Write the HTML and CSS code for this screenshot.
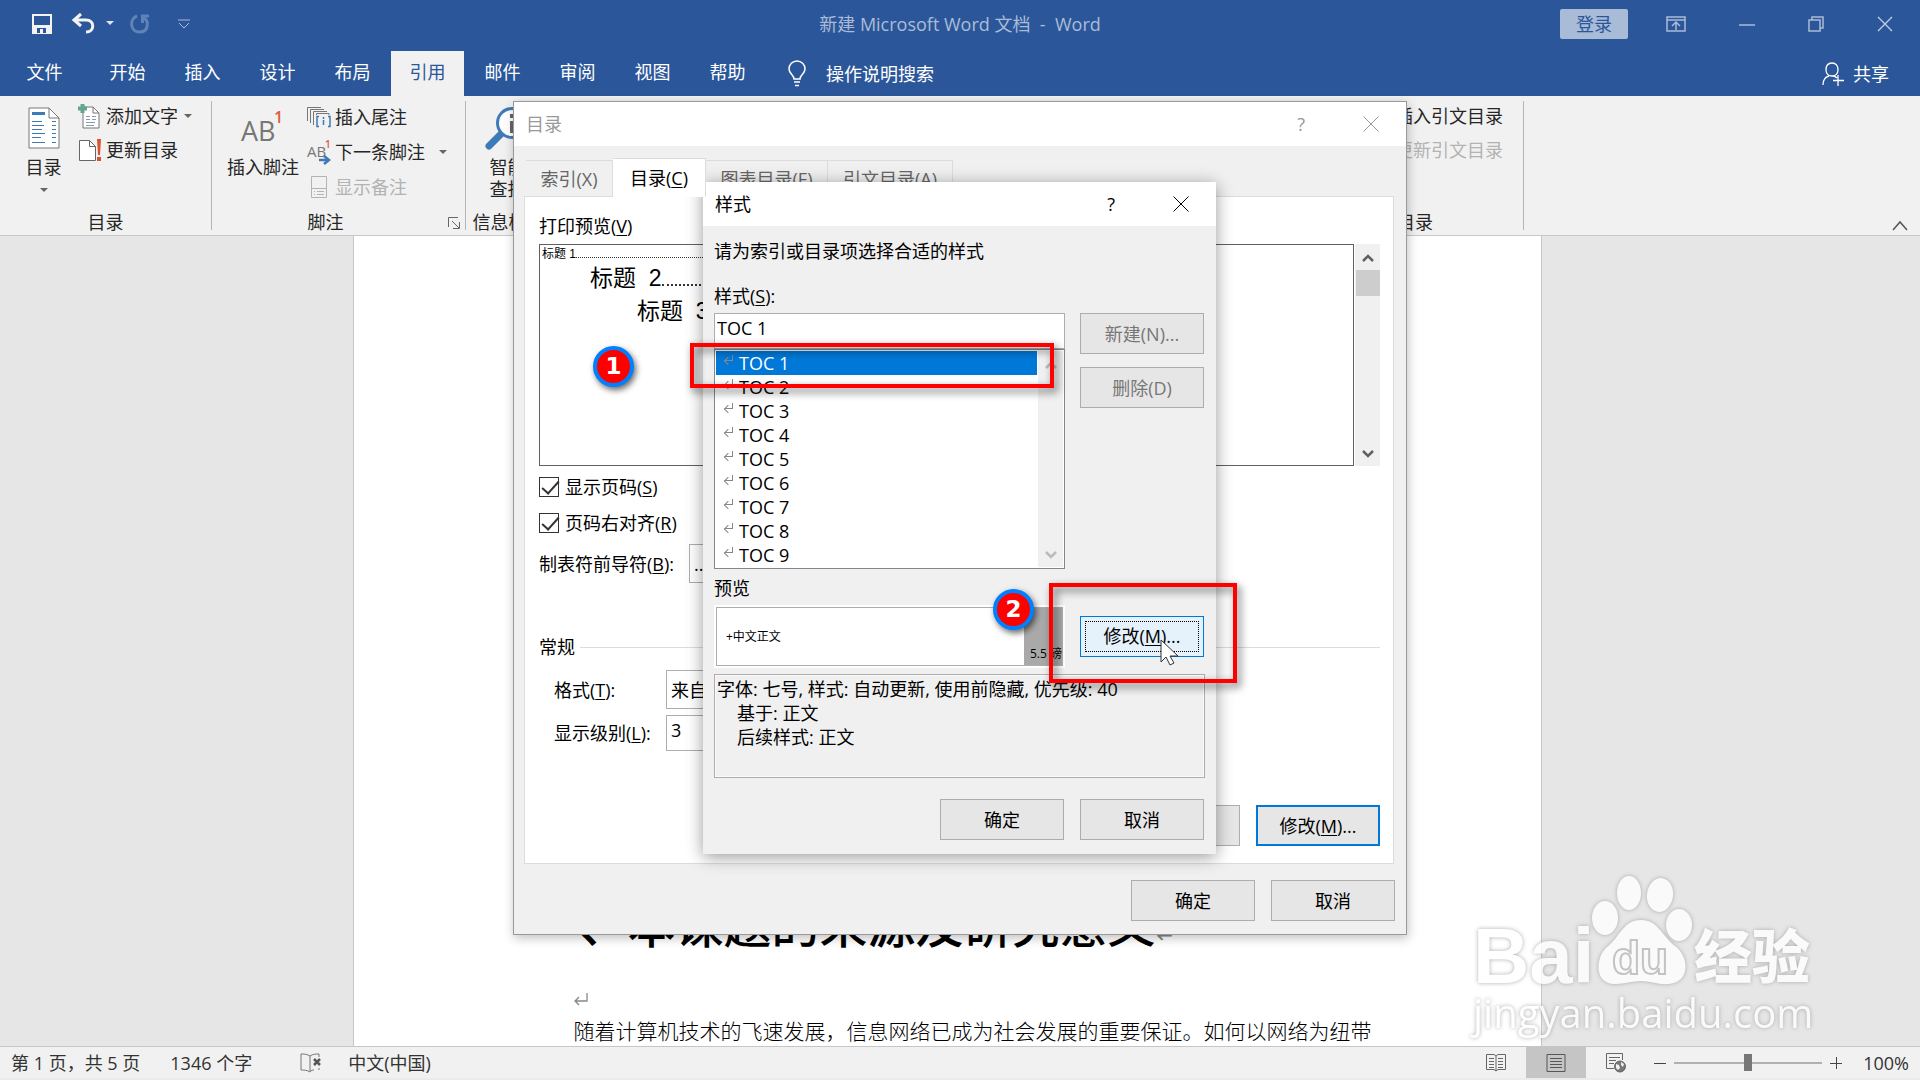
FILE: index.html
```html
<!DOCTYPE html>
<html lang="zh-CN">
<head>
  <meta charset="UTF-8" />
  <meta name="viewport" content="width=device-width, initial-scale=1.0" />
  <title>新建 Microsoft Word 文档 - Word</title>
  <link rel="stylesheet" href="styles.css">
</head>
<body>

  <header class="titlebar">
    <div class="quick-access">
      <button class="icon-btn save" aria-label="保存">
        <svg width="20" height="20" viewBox="0 0 20 20"><path d="M1 1h18v18H1z" fill="none" stroke="#f3f3f3" stroke-width="2"/><path d="M2 11h16v8H2z" fill="#f3f3f3"/><path d="M5 14h9v5H5z" fill="#2b579a"/><path d="M8 15h3v4H8z" fill="#f3f3f3"/></svg>
      </button>
      <button class="icon-btn undo" aria-label="撤消">
        <svg width="22" height="20" viewBox="0 0 22 20"><path d="M8 0 1 6l7 6M2 6h11c9 0 9 12 0 12" fill="none" stroke="#f3f3f3" stroke-width="3"/></svg>
      </button>
      <button class="icon-btn undo-more" aria-label="更多撤消">
        <svg width="8" height="5" viewBox="0 0 8 5"><path d="M0 0h8L4 4z" fill="#dfe6f1"/></svg>
      </button>
      <button class="icon-btn redo" aria-label="重复" disabled>
        <svg width="20" height="20" viewBox="0 0 20 20"><path d="M7 2C-1 5 0 18 9.500 18S19 7 14 4M12.500 9V2H19" fill="none" stroke="#6082b6" stroke-width="3"/></svg>
      </button>
      <button class="icon-btn customize" aria-label="自定义快速访问工具栏">
        <svg width="12" height="10" viewBox="0 0 12 10"><path d="M0 1h12M1 4l5 5 5-5" fill="none" stroke="#aabcd7"/></svg>
      </button>
    </div>
    <div class="doc-title">新建 Microsoft Word 文档 &nbsp;- &nbsp;Word</div>
    <div class="window-controls">
      <button class="login">登录</button>
      <button class="icon-btn" aria-label="功能区显示选项">
        <svg width="20" height="16" viewBox="0 0 20 16"><path d="M1 1h18v14H1zM1 4h18M10 14V6M6 10l4-4 4 4" fill="none" stroke="#aabcd7" stroke-width="1.500"/></svg>
      </button>
      <button class="icon-btn" aria-label="最小化">
        <svg width="16" height="16" viewBox="0 0 16 16"><path d="M0 9h16" stroke="#aabcd7" stroke-width="1.500"/></svg>
      </button>
      <button class="icon-btn" aria-label="向下还原">
        <svg width="16" height="16" viewBox="0 0 16 16"><path d="M1 4h11v11H1zM4 4V1h11v11h-3" fill="none" stroke="#aabcd7" stroke-width="1.500"/></svg>
      </button>
      <button class="icon-btn" aria-label="关闭">
        <svg width="16" height="16" viewBox="0 0 16 16"><path d="M1 1l14 14M15 1 1 15" stroke="#c3d0e3" stroke-width="1.300"/></svg>
      </button>
    </div>
  </header>

  <nav class="tabs">
    <a class="tab file" href="#file">文件</a>
    <a class="tab" href="#home">开始</a>
    <a class="tab" href="#insert">插入</a>
    <a class="tab" href="#design">设计</a>
    <a class="tab" href="#layout">布局</a>
    <a class="tab active" href="#references">引用</a>
    <a class="tab" href="#mailings">邮件</a>
    <a class="tab" href="#review">审阅</a>
    <a class="tab" href="#view">视图</a>
    <a class="tab" href="#help">帮助</a>
    <a class="tell-me" href="#search">
      <svg width="18" height="26" viewBox="0 0 18 26"><path d="M6 18c0-4-5-5-5-10a8 8 0 0 1 16 0c0 5-5 6-5 10zM6 21h6M7 24.500h4" fill="none" stroke="#fff" stroke-width="1.500"/></svg>
      操作说明搜索
    </a>
    <a class="share" href="#share">
      <svg width="22" height="24" viewBox="0 0 22 24"><path d="M1 23c0-5 2-8 6-9M11 14c2 0 3 1 4 2M10 1c-4 0-6 3-6 7s3 6 6 6 6-2 6-6-2-7-6-7zM16 13v11M11 18.500h11" fill="none" stroke="#fff" stroke-width="1.300"/></svg>
      共享
    </a>
  </nav>

  <section class="ribbon">
    <div class="group group-toc">
      <div class="group-body">
        <button class="big-btn">
          <svg width="32" height="42" viewBox="0 0 32 42"><path d="M1 1h20l10 10v30H1z" fill="#fff" stroke="#777"/><path d="M21 1v10h10" fill="none" stroke="#777"/><path d="M4 6.500h13" stroke="#3f7ab8" stroke-width="3"/><path d="M4 14.500h10M4 18.500h12M4 22.500h10M4 26.500h13M4 30.500h9M4 35.500h13M24 14.500h4M24 18.500h4M24 22.500h4M24 26.500h4M24 30.500h4M24 35.500h4" stroke="#3f7ab8"/></svg>
          <span>目录</span>
          <i class="caret"></i>
        </button>
        <div class="small-btns">
          <button class="small-btn">
            <svg width="24" height="26" viewBox="0 0 24 26"><path d="M5 4h10l6 6v15H5z" fill="#fff" stroke="#777"/><path d="M15 4v6h6" fill="none" stroke="#777"/><path d="M8 13.500h4M14 13.500h4M8 16.500h4M14 16.500h4M8 19.500h9M8 22.500h8" stroke="#8a9bb0"/><path d="M4.500 1v9M0 5.500h9" stroke="#62a78b" stroke-width="4"/></svg>
            <span>添加文字</span><i class="caret"></i>
          </button>
          <button class="small-btn">
            <svg width="24" height="26" viewBox="0 0 24 26"><path d="M1.500 3.500h10l6 6v14h-16z" fill="#fff" stroke="#666"/><path d="M11.500 3.500v6h6" fill="none" stroke="#666"/><path d="M19 2h4l-1 16h-2zM19 20h4v4h-4z" fill="#d8532d"/></svg>
            <span>更新目录</span>
          </button>
        </div>
      </div>
      <div class="group-label">目录</div>
    </div>

    <div class="group group-footnotes">
      <div class="group-body">
        <button class="big-btn">
          <svg width="44" height="42" viewBox="0 0 44 42"><text x="0" y="34" font-size="27" fill="#777">AB</text><text x="33" y="16" font-size="16" font-weight="600" fill="#dc5f3c">1</text></svg>
          <span>插入脚注</span>
        </button>
        <div class="small-btns">
          <button class="small-btn">
            <svg width="24" height="24" viewBox="0 0 24 24"><path d="M.500 16V2.500H14M3.500 18V4.500H17M6.500 20V6.500H20M9.500 10V8.500H22V10" fill="none" stroke="#777"/><path d="M12 11.500h-2v10h2M21 11.500h2v10h-2M16.500 15v5M16.500 12v2" fill="none" stroke="#3f7ab8" stroke-width="1.500"/></svg>
            <span>插入尾注</span>
          </button>
          <button class="small-btn">
            <svg width="24" height="26" viewBox="0 0 24 26"><text x="0" y="18" font-size="15" fill="#777">AB</text><text x="18" y="9" font-size="10" font-weight="600" fill="#dc5f3c">1</text><path d="M12 21h9M17 17l5 4-5 4" fill="none" stroke="#3f7ab8" stroke-width="2.500"/></svg>
            <span>下一条脚注</span><i class="caret wide"></i>
          </button>
          <button class="small-btn" disabled>
            <svg width="24" height="24" viewBox="0 0 24 24"><path d="M4.500 1.500h15v21h-15zM4.500 13.500h15M7 16.500h1M10 16.500h7M7 19.500h1M10 19.500h7" fill="none" stroke="#b3b3b3"/></svg>
            <span>显示备注</span>
          </button>
        </div>
      </div>
      <div class="group-label">脚注</div>
      <button class="launcher" aria-label="脚注和尾注">
        <svg width="12" height="12" viewBox="0 0 12 12"><path d="M.500 10V.500H10M4 4l7 7M11.500 5v6.500H5" fill="none" stroke="#666"/></svg>
      </button>
    </div>

    <div class="group group-research">
      <div class="group-body">
        <button class="big-btn">
          <svg width="44" height="42" viewBox="0 0 44 42"><path d="M3 39 17 25" stroke="#3f7ab8" stroke-width="7" stroke-linecap="round"/><circle cx="26" cy="16" r="14.500" fill="#fff" stroke="#3f7ab8" stroke-width="3"/><path d="M24 14h4v12h-4zM24 7h4v4h-4z" fill="#666"/></svg>
          <span>智能<br>查找</span>
        </button>
      </div>
      <div class="group-label">信息检索</div>
    </div>
    <div class="group group-citations"></div>
    <div class="group group-captions"></div>
    <div class="group group-index"></div>
    <div class="group group-authorities">
      <div class="group-body">
        <div class="small-btns">
          <button class="small-btn"><span>插入引文目录</span></button>
          <button class="small-btn" disabled><span>更新引文目录</span></button>
        </div>
      </div>
      <div class="group-label">引文目录</div>
    </div>
    <button class="collapse" aria-label="折叠功能区">
      <svg width="16" height="10" viewBox="0 0 16 10"><path d="M1 9l7-8 7 8" fill="none" stroke="#555" stroke-width="1.500"/></svg>
    </button>
  </section>

  <main class="workspace">
    <article class="page">
      <h1>一、本课题的来源及研究意义<span class="mark">↵</span></h1>
      <p class="mark">
        <svg width="14" height="13" viewBox="0 0 14 13"><path d="M13 0v8H2M5 4 1 8l4 4" fill="none" stroke="#888" stroke-width="1.300"/></svg>
      </p>
      <p>随着计算机技术的飞速发展，信息网络已成为社会发展的重要保证。如何以网络为纽带</p>
    </article>
    <svg class="watermark" width="350" height="180" viewBox="0 0 350 180">
      <g fill="#fff">
        <text class="wm-latin" x="0" y="113" font-size="78">Bai</text>
        <ellipse cx="132" cy="48" rx="13" ry="17"/>
        <ellipse cx="156" cy="23" rx="12" ry="17"/>
        <ellipse cx="187" cy="25" rx="13" ry="17" transform="rotate(8 187 25)"/>
        <ellipse cx="206" cy="55" rx="13" ry="16"/>
        <path d="M168 50c-18 0-20 16-34 27-11 9-14 37 8 37 10 0 17-3 26-3s18 4 28 3c22-2 20-28 6-38-14-11-17-26-34-26z"/>
        <text class="wm-cjk" x="221" y="108" font-size="58">经验</text>
        <text class="wm-url" x="0" y="158" font-size="40">jingyan.baidu.com</text>
      </g>
      <text class="wm-du" x="139" y="104" font-size="46">du</text>
    </svg>
  </main>

  <footer class="statusbar">
    <span class="page-count">第 1 页，共 5 页</span>
    <span class="word-count">1346 个字</span>
    <button class="icon-btn proof" aria-label="校对">
      <svg width="22" height="20" viewBox="0 0 22 20"><path d="M10 3c-3-2-6-2-9-2v16c3 0 6 0 9 2 1-2 3-2 4-2M10 3v15M10 3c3-2 6-2 9-2v3M19 15v2" fill="none" stroke="#777"/><path d="M14 6l6 6M20 6l-6 6" stroke="#555" stroke-width="2.500"/></svg>
    </button>
    <span class="language">中文(中国)</span>
    <div class="views">
      <button class="view-btn" aria-label="阅读视图">
        <svg width="20" height="20" viewBox="0 0 20 20"><path d="M10 3 8 1.500H.500v15H8l2 1.500 2-1.500h7.500v-15H12zM10 3v15M3 5.500h5M3 8.500h5M3 11.500h5M3 14.500h5M12 5.500h5M12 8.500h5M12 11.500h5M12 14.500h5" fill="none" stroke="#666"/></svg>
      </button>
      <button class="view-btn selected" aria-label="页面视图">
        <svg width="20" height="20" viewBox="0 0 20 20"><path d="M1 1.500h18v17H1zM4 5.500h12M4 8.500h12M4 11.500h12M4 14.500h12" fill="none" stroke="#555"/></svg>
      </button>
      <button class="view-btn" aria-label="Web 版式视图">
        <svg width="20" height="20" viewBox="0 0 20 20"><path d="M8 15.500H.500v-15h16V7M3 4.500h11M3 7.500h7M3 10.500h5" fill="none" stroke="#666"/><circle cx="14" cy="13.500" r="5.500" fill="#777" stroke="#666"/><path d="M10 11l3 1 1 3-2 2-2-2zM15 9l3 2-1 3-2-2z" fill="#f1f1f1"/></svg>
      </button>
    </div>
    <div class="zoom">
      <button class="icon-btn" aria-label="缩小"><svg width="12" height="12" viewBox="0 0 12 12"><path d="M0 6.500h12" stroke="#444"/></svg></button>
      <input type="range" min="0" max="100" value="50" aria-label="显示比例">
      <button class="icon-btn" aria-label="放大"><svg width="12" height="12" viewBox="0 0 12 12"><path d="M0 6.500h12M6.500 0v12" stroke="#444"/></svg></button>
      <span>100%</span>
    </div>
  </footer>

  <!-- table of contents dialog -->
  <div class="dialog toc-dialog" role="dialog" aria-label="目录">
    <div class="dialog-title">
      <span>目录</span>
      <button class="icon-btn" aria-label="帮助">?</button>
      <button class="icon-btn" aria-label="关闭"><svg width="16" height="16" viewBox="0 0 16 16"><path d="M.500.500l15 15M15.500.500l-15 15" stroke="currentColor"/></svg></button>
    </div>
    <div class="dialog-tabs">
      <button class="dtab dtab-index">索引(X)</button>
      <button class="dtab dtab-toc active">目录(<u>C</u>)</button>
      <button class="dtab dtab-figures">图表目录(F)</button>
      <button class="dtab dtab-auth">引文目录(A)</button>
    </div>
    <div class="panel">
      <div class="field-label">打印预览(<u>V</u>)</div>
      <div class="print-preview">
        <div class="preview-text">
          <div class="level-1"><span>标题 1</span></div>
          <div class="level-2"><span>标题  2</span></div>
          <div class="level-3"><span>标题  3</span></div>
        </div>
        <div class="scrollbar">
          <svg width="12" height="9" viewBox="0 0 12 9"><path d="M1 7l5-5 5 5" fill="none" stroke="currentColor" stroke-width="2.500"/></svg>
          <div class="thumb"></div>
          <svg width="12" height="9" viewBox="0 0 12 9"><path d="M1 2l5 5 5-5" fill="none" stroke="currentColor" stroke-width="2.500"/></svg>
        </div>
      </div>
      <label class="check first"><input type="checkbox" checked>显示页码(<u>S</u>)</label>
      <label class="check"><input type="checkbox" checked>页码右对齐(<u>R</u>)</label>
      <div class="form-row leader">
        <label for="leader">制表符前导符(<u>B</u>):</label>
        <select id="leader"><option>......</option></select>
      </div>
      <div class="section-title">常规</div>
      <div class="form-row format">
        <label for="format">格式(<u>T</u>):</label>
        <select id="format"><option>来自模板</option></select>
      </div>
      <div class="form-row levels">
        <label for="levels">显示级别(<u>L</u>):</label>
        <input id="levels" type="text" value="3">
      </div>
      <div class="buttons panel-buttons">
        <button class="btn" aria-label="选项"></button>
        <button class="btn default">修改(<u>M</u>)...</button>
      </div>
    </div>
    <div class="buttons dialog-buttons">
      <button class="btn">确定</button>
      <button class="btn">取消</button>
    </div>
  </div>

  <!-- style dialog -->
  <div class="dialog style-dialog" role="dialog" aria-label="样式">
    <div class="dialog-title">
      <span>样式</span>
      <button class="icon-btn" aria-label="帮助">?</button>
      <button class="icon-btn" aria-label="关闭"><svg width="16" height="16" viewBox="0 0 16 16"><path d="M.500.500l15 15M15.500.500l-15 15" stroke="currentColor"/></svg></button>
    </div>
    <div class="style-body">
      <p class="intro">请为索引或目录项选择合适的样式</p>
      <label class="style-label" for="style-name">样式(<u>S</u>):</label>
      <div class="style-row">
        <div class="style-picker">
          <input id="style-name" type="text" value="TOC 1">
          <div class="style-list">
            <ul role="listbox" aria-label="样式">
              <li role="option" class="selected" aria-selected="true"><i></i>TOC 1</li>
              <li role="option"><i></i>TOC 2</li>
              <li role="option"><i></i>TOC 3</li>
              <li role="option"><i></i>TOC 4</li>
              <li role="option"><i></i>TOC 5</li>
              <li role="option"><i></i>TOC 6</li>
              <li role="option"><i></i>TOC 7</li>
              <li role="option"><i></i>TOC 8</li>
              <li role="option"><i></i>TOC 9</li>
            </ul>
            <div class="scrollbar idle">
              <svg width="12" height="9" viewBox="0 0 12 9"><path d="M1 7l5-5 5 5" fill="none" stroke="currentColor" stroke-width="2.500"/></svg>
              <svg width="12" height="9" viewBox="0 0 12 9"><path d="M1 2l5 5 5-5" fill="none" stroke="currentColor" stroke-width="2.500"/></svg>
            </div>
          </div>
        </div>
        <div class="style-actions">
          <button class="btn" disabled>新建(N)...</button>
          <button class="btn" disabled>删除(D)</button>
        </div>
      </div>
      <div class="preview-label">预览</div>
      <div class="style-row center">
        <div class="style-preview">
          <div class="sample"><span>+中文正文</span><b>5.5 磅</b></div>
        </div>
        <button class="btn hot"><span>修改(<u>M</u>)...</span></button>
      </div>
      <div class="description">
        <p>字体: 七号, 样式: 自动更新, 使用前隐藏, 优先级: 40</p>
        <p class="indent">基于: 正文</p>
        <p class="indent">后续样式: 正文</p>
      </div>
      <div class="buttons">
        <button class="btn">确定</button>
        <button class="btn">取消</button>
      </div>
    </div>

    <!-- step callouts -->
    <div class="callout callout-1"></div>
    <div class="callout callout-2"></div>
    <div class="badge badge-1">1</div>
    <div class="badge badge-2">2</div>
    <svg class="cursor" width="20" height="28" viewBox="0 0 20 28"><path d="M1 1v22l5-5 4 8 4-2-4-7h8z" fill="#fff" stroke="#333"/></svg>
  </div>

</body>
</html>
```
FILE: styles.css
```css
* {
  box-sizing: border-box;
}
html, body {
  margin: 0;
  height: 100%;
  overflow: hidden;
}
body {
  display: flex;
  flex-direction: column;
  position: relative;
  background: #e6e6e6;
  color: #262626;
  font-family: "Open Sans", "Noto Sans CJK SC", sans-serif;
  font-size: 18px;
  line-height: 24px;
}
button, input, select {
  font: inherit;
  color: inherit;
  margin: 0;
  padding: 0;
  border-radius: 0;
}
button {
  background: none;
  border: none;
}
a {
  color: inherit;
  text-decoration: none;
}
p, ul, h1 {
  margin: 0;
  padding: 0;
}
svg {
  display: block;
  flex-shrink: 0;
  overflow: visible;
}
u {
  text-underline-offset: 2px;
}
.icon-btn {
  display: flex;
  align-items: center;
  justify-content: center;
}

/* title bar */
.titlebar {
  display: grid;
  grid-template-columns: 1fr auto 1fr;
  align-items: center;
  height: 51px;
  padding-bottom: 4px;
  background: #2b579a;
}
.quick-access {
  display: flex;
  align-items: center;
  padding-left: 32px;
}
.undo {
  margin-left: 21px;
}
.undo-more {
  margin-left: 11px;
}
.redo {
  margin-left: 16px;
}
.customize {
  margin-left: 28px;
}
.doc-title {
  color: #aabcd7;
}
.window-controls {
  display: flex;
  align-items: center;
  justify-content: flex-end;
  gap: 53px;
  padding-right: 27px;
}
.login {
  width: 68px;
  height: 30px;
  margin-right: -15px;
  background: #a8bbd7;
  color: #2b579a;
  border-radius: 2px;
}

/* ribbon tabs */
.tabs {
  display: flex;
  gap: 2px;
  height: 45px;
  background: #2b579a;
  color: #fff;
}
.tab {
  width: 73px;
  line-height: 43px;
  text-align: center;
}
.tab.file {
  width: 89px;
}
.tab.active {
  background: #f1f1f1;
  color: #2b579a;
}
.tell-me, .share {
  display: flex;
  align-items: center;
}
.tell-me {
  gap: 20px;
  margin-left: 22px;
}
.share {
  gap: 9px;
  margin-left: auto;
  padding-right: 31px;
}

/* ribbon */
.ribbon {
  display: flex;
  height: 140px;
  background: #f1f1f1;
  border-bottom: 1px solid #c8c8c8;
}
.group {
  display: flex;
  flex-direction: column;
  position: relative;
  margin: 5px 0;
  border-right: 1px solid #b5b5b5;
}
.group-toc {
  width: 212px;
}
.group-footnotes {
  width: 254px;
}
.group-research {
  width: 86px;
}
.group-citations {
  width: 288px;
}
.group-captions {
  width: 233px;
}
.group-index {
  width: 198px;
}
.group-authorities {
  width: 253px;
}
.group-body {
  display: flex;
  flex: 1;
  gap: 8px;
  padding-left: 15px;
}
.group-authorities .group-body {
  justify-content: flex-end;
  padding-right: 20px;
}
.group-label {
  height: 22px;
  margin-bottom: -2px;
  text-align: center;
  white-space: nowrap;
}
.group-footnotes .group-label {
  padding-right: 26px;
}
.group-toc .group-body {
  padding-left: 17px;
}
.big-btn {
  display: flex;
  flex-direction: column;
  align-items: center;
  min-width: 53px;
  padding-top: 6px;
  line-height: 22px;
  white-space: nowrap;
}
.big-btn span {
  margin-top: 7px;
}
.big-btn .caret {
  margin-top: 10px;
}
.small-btns {
  display: flex;
  flex-direction: column;
  margin-top: -2px;
}
.small-btn {
  display: flex;
  align-items: center;
  gap: 4px;
  height: 34px;
  white-space: nowrap;
}
.group-footnotes .small-btn {
  height: 35px;
}
.small-btn:disabled {
  color: #b3b3b3;
}
.caret {
  border: 4px solid transparent;
  border-top-color: #666;
  border-bottom: none;
}
.small-btn .caret {
  margin-left: 2px;
}
.small-btn .caret.wide {
  margin-left: 10px;
}
.launcher {
  position: absolute;
  right: 5px;
  bottom: 1px;
}
.collapse {
  align-self: flex-end;
  margin: 0 12px 4px auto;
}

/* document */
.workspace {
  display: flex;
  flex: 1;
  justify-content: center;
  position: relative;
  min-height: 0;
  padding-right: 26px;
  overflow: hidden;
}
.page {
  display: flex;
  flex-direction: column;
  justify-content: flex-end;
  width: 1189px;
  padding: 0 140px 0 220px;
  background: #fff;
  border: 1px solid #c6c6c6;
  border-width: 0 1px;
  color: #000;
  font-family: "Liberation Serif", "Noto Sans CJK SC", serif;
  font-size: 21px;
}
.page h1 {
  margin-left: -42px;
  font-size: 48px;
  font-weight: 500;
  line-height: 54px;
  white-space: nowrap;
}
.page h1 .mark {
  color: #888;
  font-size: 24px;
  line-height: 0;
}
.page p {
  height: 30px;
  font-weight: 300;
  line-height: 32px;
  white-space: nowrap;
}
.page p.mark {
  height: 62px;
  padding-top: 39px;
}
.watermark {
  position: absolute;
  right: 97px;
  bottom: -4px;
  opacity: 0.8;
  filter: drop-shadow(0 0 2px #999);
}
.wm-latin {
  font-family: "Liberation Sans", sans-serif;
  font-weight: bold;
}
.wm-cjk {
  font-family: "Noto Sans CJK SC", sans-serif;
  font-weight: 900;
}
.wm-url {
  font-family: "Open Sans", sans-serif;
}
.wm-du {
  fill: #fff;
  stroke: #bbb;
  stroke-width: 2px;
  font-family: "Liberation Sans", sans-serif;
  font-weight: bold;
}

/* status bar */
.statusbar {
  display: flex;
  align-items: center;
  height: 34px;
  padding: 0 11px;
  background: #f1f1f1;
  border-top: 1px solid #c6c6c6;
  border-bottom: 2px solid #ebebeb;
  color: #333;
}
.word-count {
  margin-left: 30px;
}
.proof {
  margin-left: 48px;
}
.language {
  margin-left: 26px;
}
.views {
  display: flex;
  height: 31px;
  margin-left: auto;
}
.view-btn {
  display: flex;
  align-items: center;
  justify-content: center;
  width: 60px;
}
.view-btn.selected {
  background: #c5c5c5;
}
.zoom {
  display: flex;
  align-items: center;
  gap: 8px;
  margin-left: 8px;
}
.zoom span {
  width: 50px;
  margin-left: 9px;
  text-align: right;
}
.zoom input {
  width: 148px;
  height: 18px;
  appearance: none;
  background: linear-gradient(#b0b0b0, #b0b0b0) center / 100% 2px no-repeat;
}
.zoom input::-webkit-slider-thumb {
  appearance: none;
  width: 8px;
  height: 17px;
  background: #777;
}

/* dialogs */
.dialog {
  display: flex;
  flex-direction: column;
  position: absolute;
  background: #f0f0f0;
  color: #000;
}
.dialog-title {
  display: flex;
  align-items: center;
  height: 44px;
  padding: 0 27px 0 12px;
  background: #fff;
}
.dialog-title span {
  margin-right: auto;
}
.dialog-title .icon-btn + .icon-btn {
  margin-left: 58px;
}
.btn {
  width: 124px;
  height: 41px;
  background: #e6e6e6;
  border: 1px solid #adadad;
}
.btn:disabled {
  color: #777;
}
.btn.default {
  border: 2px solid #0078d7;
}
.btn.hot {
  padding: 4px;
  background: #e5f1fb;
  border-color: #0078d7;
}
.btn.hot span {
  display: block;
  border: 1px dotted #000;
  line-height: 29px;
}
.buttons {
  display: flex;
  justify-content: flex-end;
  gap: 16px;
}
.scrollbar {
  display: flex;
  flex-direction: column;
  justify-content: space-between;
  align-items: center;
  width: 25px;
  padding: 10px 0 8px;
  background: #f0f0f0;
  color: #606060;
}
.scrollbar.idle {
  color: #bbb;
}
.scrollbar .thumb {
  width: 24px;
  height: 26px;
  margin: 7px 0 auto;
  background: #cdcdcd;
}

.toc-dialog {
  top: 101px;
  left: calc(50% - 447px);
  width: 894px;
  border: 1px solid #999;
  box-shadow: 1px 3px 10px rgba(0, 0, 0, 0.25);
}
.toc-dialog .dialog-title {
  color: #999;
}
.dialog-tabs {
  display: flex;
  align-items: flex-end;
  height: 51px;
  padding-left: 12px;
}
.dtab {
  height: 37px;
  border: 1px solid #dcdcdc;
  border-left: none;
  color: #666;
}
.dtab-index {
  width: 87px;
}
.dtab-toc {
  width: 93px;
}
.dtab-figures {
  width: 122px;
}
.dtab-auth {
  width: 125px;
}
.dtab.active {
  z-index: 1;
  height: 39px;
  background: #fff;
  border-bottom-color: #fff;
  color: #000;
}
.panel {
  margin: -1px 12px 0 10px;
  padding: 17px 13px 17px 14px;
  background: #fff;
  border: 1px solid #dcdcdc;
}
.print-preview {
  display: flex;
  gap: 1px;
  height: 222px;
  margin-top: 6px;
}
.preview-text {
  flex: 1;
  padding: 2px 200px 0 2px;
  border: 1px solid #606060;
  font-family: "Liberation Sans", "Noto Sans CJK SC", sans-serif;
}
.preview-text div {
  display: flex;
  align-items: baseline;
}
.preview-text div::after {
  content: "";
  flex: 1;
  border-bottom: 2px dotted #333;
}
.preview-text .level-1 {
  height: 15px;
  font-size: 12px;
  line-height: 15px;
}
.preview-text .level-1::after {
  border-width: 1px;
}
.preview-text .level-2, .preview-text .level-3 {
  font-size: 23px;
  line-height: 33px;
}
.preview-text .level-2 {
  padding-left: 48px;
}
.preview-text .level-3 {
  padding-left: 95px;
}
.preview-text .level-2 span, .preview-text .level-3 span {
  white-space: pre;
}
.check {
  display: flex;
  align-items: center;
  height: 24px;
  margin-top: 12px;
}
.check.first {
  margin-top: 9px;
}
.check input {
  width: 20px;
  height: 20px;
  margin-right: 6px;
  appearance: none;
  border: 1px solid #333;
  background: #fff;
}
.check input:checked::after {
  content: "";
  display: block;
  width: 15px;
  height: 7px;
  margin: 3px 0 0 2px;
  border: solid #333;
  border-width: 0 0 2px 2px;
  transform: rotate(-48deg);
}
.form-row {
  display: flex;
  align-items: center;
}
.form-row select, .form-row input {
  appearance: none;
  width: 230px;
  height: 39px;
  padding-left: 4px;
  background: #fff;
  border: 1px solid #adadad;
}
.leader {
  margin-top: 9px;
}
.leader label {
  width: 150px;
}
.section-title {
  display: flex;
  align-items: center;
  gap: 5px;
  margin-top: 52px;
}
.section-title::after {
  content: "";
  flex: 1;
  border-top: 1px solid #dcdcdc;
}
.format, .levels {
  padding-left: 15px;
}
.format label, .levels label {
  width: 112px;
}
.format {
  margin-top: 11px;
}
.levels {
  margin-top: 6px;
}
.form-row.levels input {
  height: 36px;
  padding-bottom: 6px;
}
.panel-buttons {
  margin-top: 54px;
}
.dialog-buttons {
  padding: 16px 11px 13px;
}

.style-dialog {
  top: 182px;
  left: calc(50% - 257px);
  width: 513px;
  box-shadow: 0 3px 16px rgba(0, 0, 0, 0.4);
}
.style-body {
  padding: 13px 12px 14px 11px;
}
.style-label {
  display: block;
  margin-top: 21px;
}
.style-row {
  display: flex;
  gap: 15px;
  margin-top: 5px;
}
.style-row.center {
  align-items: center;
}
.style-picker, .style-preview {
  width: 351px;
}
.style-picker input {
  display: block;
  width: 100%;
  height: 36px;
  padding: 0 2px 6px;
  background: #fff;
  border: 1px solid #adadad;
}
.style-list {
  display: flex;
  height: 220px;
  padding: 1px;
  background: #fff;
  border: 1px solid #828790;
}
.style-list ul {
  flex: 1;
  margin-right: 1px;
  list-style: none;
}
.style-list li {
  display: flex;
  height: 24px;
  padding-left: 9px;
}
.style-list li.selected {
  background: #0078d7;
  color: #fff;
}
/* paragraph mark in front of each style name */
.style-list li i {
  width: 8px;
  height: 6px;
  margin: 4px 6px 0 0;
  border: solid #888;
  border-width: 0 1px 1px 0;
}
.style-list li i::before {
  content: "";
  display: block;
  width: 5px;
  height: 5px;
  margin-top: 3px;
  border: solid #888;
  border-width: 0 0 1px 1px;
  transform: rotate(45deg);
}
.style-actions {
  display: flex;
  flex-direction: column;
  gap: 13px;
}
.preview-label {
  margin-top: 7px;
}
.style-preview {
  padding: 2px;
  background: #fff;
}
.sample {
  display: flex;
  height: 59px;
  border: 1px solid #adadad;
  font-size: 12px;
}
.sample span {
  flex: 1;
  padding-left: 9px;
  line-height: 58px;
}
.sample b {
  width: 38px;
  padding: 34px 0 0 6px;
  background: #a9a9a9;
  font-size: 12px;
  font-weight: normal;
  white-space: nowrap;
  overflow: hidden;
}
.description {
  height: 104px;
  width: 491px;
  margin-top: 6px;
  padding: 2px;
  border: 1px solid #adadad;
  box-shadow: inset 0 0 0 1px #fafafa;
  white-space: nowrap;
}
.description .indent {
  padding-left: 20px;
}
.style-body .buttons {
  margin-top: 21px;
}

/* callouts */
.callout {
  position: absolute;
  border: 4px solid #f00;
  filter: drop-shadow(3px 4px 4px rgba(0, 0, 0, 0.6));
}
.callout-1 {
  top: 161px;
  left: -13px;
  width: 364px;
  height: 45px;
}
.callout-2 {
  top: 401px;
  left: 346px;
  width: 188px;
  height: 100px;
}
.badge {
  position: absolute;
  width: 41px;
  height: 41px;
  border: 4px solid #007fff;
  border-radius: 50%;
  background: #f00;
  box-shadow: 2px 3px 6px rgba(0, 0, 0, 0.6);
  color: #fff;
  font-family: "DejaVu Sans", sans-serif;
  font-size: 23px;
  font-weight: bold;
  line-height: 33px;
  text-align: center;
}
.badge-1 {
  top: 164px;
  left: -110px;
}
.badge-2 {
  top: 407px;
  left: 290px;
}
.cursor {
  position: absolute;
  top: 457px;
  left: 457px;
}
```
